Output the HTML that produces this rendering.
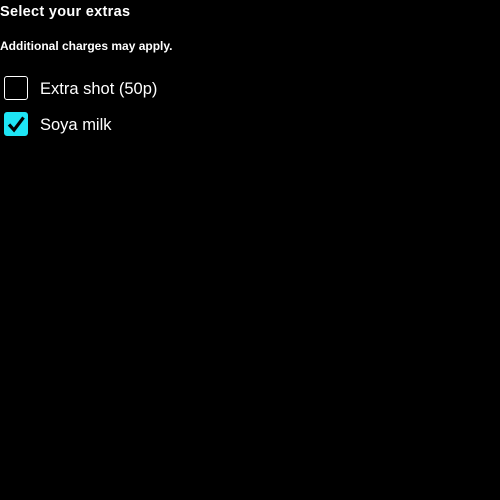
<!DOCTYPE html>
<html><head><style>
body{margin:0;background:#000;width:500px;height:500px;color:#fff;font-family:"Liberation Sans",sans-serif;}
.t{position:absolute;left:0;top:4px;font-size:14.5px;font-weight:bold;letter-spacing:0.3px}
.s{position:absolute;left:0;top:39px;font-size:12px;font-weight:bold}
.cb{position:absolute;left:4px;width:22px;height:22px;border:1px solid #fff;border-radius:3px}
.l{position:absolute;left:40px;font-size:16.5px}
</style></head><body>
<div class="t">Select your extras</div>
<div class="s">Additional charges may apply.</div>
<div class="cb" style="top:76px"></div>
<div class="l" style="top:80px">Extra shot (50p)</div>
<div class="cb" style="top:112px;background:#1ee5f5;border-color:#1ee5f5">
<svg width="22" height="22" viewBox="0 0 22 22"><path d="M4 11.5 L9 17 L18.5 4.5" fill="none" stroke="#000" stroke-width="3.2"/></svg></div>
<div class="l" style="top:116px">Soya milk</div>
</body></html>
